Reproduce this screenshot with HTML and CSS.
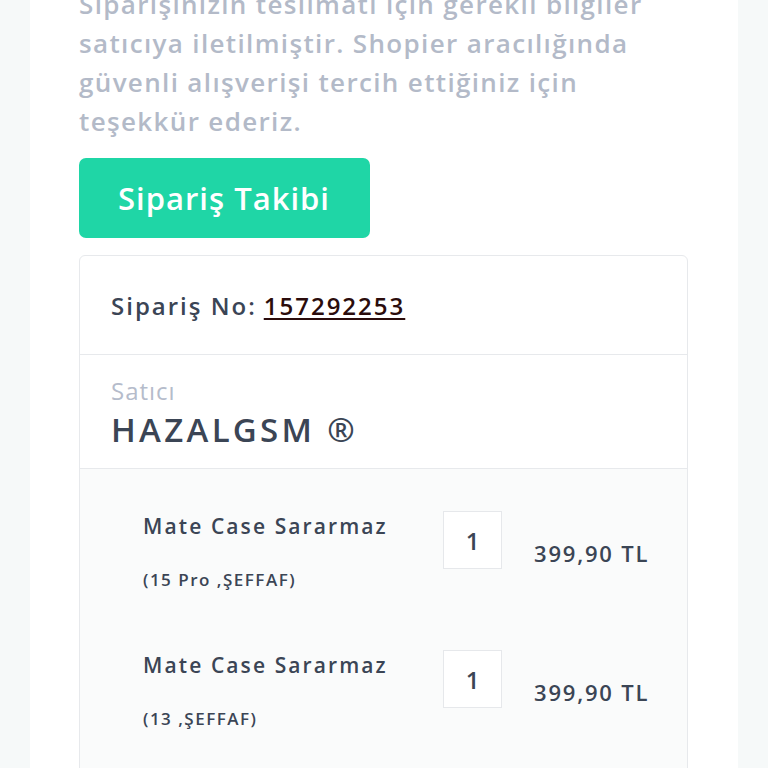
FILE: index.html
```html
<!DOCTYPE html>
<html lang="tr">
<head>
<meta charset="utf-8">
<link rel="stylesheet" href="styles.css">
</head>
<body>
<div class="page">
  <p class="intro">Siparişinizin teslimatı için gerekli bilgiler<br>satıcıya iletilmiştir. Shopier aracılığında<br>güvenli alışverişi tercih ettiğiniz için<br>teşekkür ederiz.</p>
  <a class="track-btn">Sipariş Takibi</a>
  <div class="card">
    <div class="card-head">Sipariş No: <a class="order-no">157292253</a></div>
    <div class="seller">
      <div class="seller-label">Satıcı</div>
      <div class="seller-name">HAZALGSM ®</div>
    </div>
    <div class="items">
      <div class="item">
        <div class="info">
          <div class="name">Mate Case Sararmaz</div>
          <div class="variant">(15 Pro ,ŞEFFAF)</div>
        </div>
        <div class="qty">1</div>
        <div class="price">399,90 TL</div>
      </div>
      <div class="item">
        <div class="info">
          <div class="name">Mate Case Sararmaz</div>
          <div class="variant">(13 ,ŞEFFAF)</div>
        </div>
        <div class="qty">1</div>
        <div class="price">399,90 TL</div>
      </div>
    </div>
  </div>
</div>
</body>
</html>
```

FILE: styles.css
```css
html, body {
  margin: 0;
  padding: 0;
  height: 100%;
  overflow: hidden;
}
body {
  background: #f6f9f9;
  font-family: "Open Sans", "Noto Sans", sans-serif;
  color: #3b4555;
}
.page {
  background: #ffffff;
  margin: 0 30px;
  min-height: 100%;
  padding: 0 50px 0 49px;
  display: flex;
  flex-direction: column;
  align-items: flex-start;
}
.intro {
  margin: -15px 0 0 0;
  font-size: 26px;
  line-height: 39px;
  font-weight: 600;
  letter-spacing: 1.35px;
  color: #b3bac8;
  white-space: nowrap;
}
.track-btn {
  margin-top: 17px;
  display: flex;
  align-items: center;
  height: 80px;
  width: 291px;
  box-sizing: border-box;
  padding-left: 39px;
  background: #1fd6a6;
  border-radius: 7px;
  color: #ffffff;
  font-size: 31px;
  font-weight: 600;
  letter-spacing: 1px;
}
.card {
  margin-top: 17px;
  width: 609px;
  box-sizing: border-box;
  border: 1px solid #e7e9ec;
  border-radius: 6px;
  overflow: hidden;
  background: #fff;
}
.card-head {
  height: 98px;
  display: flex;
  align-items: center;
  padding: 0 0 0 31px;
  font-size: 24px;
  font-weight: 600;
  letter-spacing: 2px;
  border-bottom: 1px solid #e7e9ec;
}
.card-head .order-no {
  margin-left: 7px;
  color: #2b0c0c;
  text-decoration: underline;
  text-underline-offset: 3px;
  text-decoration-thickness: 2px;
}
.seller {
  height: 114px;
  box-sizing: border-box;
  padding: 20px 0 0 31px;
  border-bottom: 1px solid #e7e9ec;
}
.seller-label {
  font-size: 24px;
  line-height: 32px;
  font-weight: 500;
  letter-spacing: 1px;
  color: #b5bccb;
}
.seller-name {
  font-size: 33px;
  line-height: 46px;
  font-weight: 600;
  letter-spacing: 3.3px;
  color: #3b4555;
}
.items {
  background: #fafbfb;
  padding: 42px 0 0 63px;
  height: 400px;
}
.item {
  display: flex;
  align-items: flex-start;
  height: 139px;
}
.info {
  width: 300px;
}
.name {
  font-size: 21px;
  line-height: 30px;
  font-weight: 600;
  letter-spacing: 2.1px;
}
.variant {
  margin-top: 27px;
  font-size: 17px;
  line-height: 24px;
  font-weight: 600;
  letter-spacing: 1.5px;
}
.qty {
  width: 59px;
  height: 58px;
  box-sizing: border-box;
  border: 1px solid #e6e8eb;
  background: #fff;
  display: flex;
  align-items: center;
  justify-content: center;
  font-size: 24px;
  font-weight: 600;
}
.price {
  margin-left: 32px;
  margin-top: 27px;
  font-size: 22px;
  line-height: 30px;
  font-weight: 600;
  letter-spacing: 1.8px;
}
```
